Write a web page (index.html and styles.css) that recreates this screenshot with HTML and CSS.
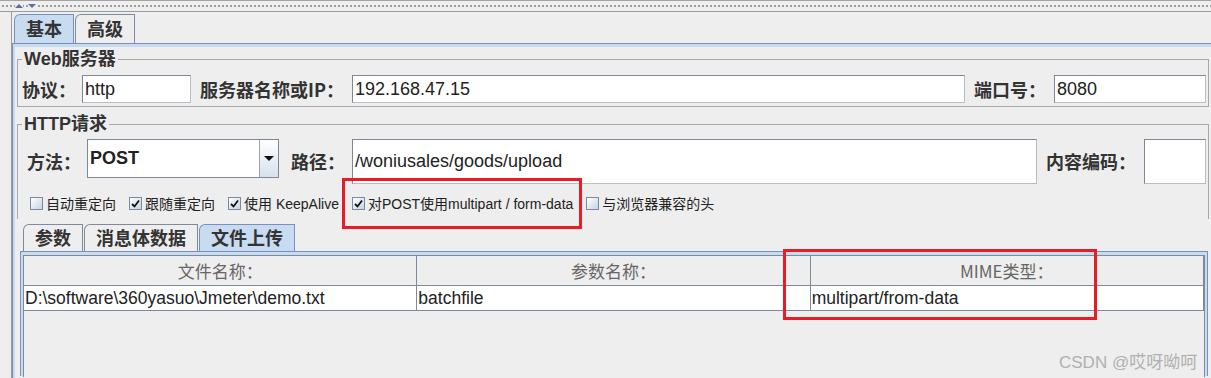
FILE: index.html
```html
<!DOCTYPE html>
<html>
<head>
    <title>HTTP请求</title>
    <link rel="stylesheet" href="styles.css">
</head>
<body>
    <div class="splitter">
        <span class="arrow-up"></span>
        <span class="arrow-down"></span>
    </div>
    <div class="main">
        <div class="tabs">
            <div class="tab selected">基本</div>
            <div class="tab">高级</div>
        </div>
        <div class="tab-panel">
            <fieldset class="group">
                <legend>Web服务器</legend>
                <div class="row web-row">
                    <label class="lbl">协议：</label>
                    <div class="field w-proto">http</div>
                    <label class="lbl gap-l">服务器名称或IP：</label>
                    <div class="field grow">192.168.47.15</div>
                    <label class="lbl gap-l">端口号：</label>
                    <div class="field w-port">8080</div>
                </div>
            </fieldset>
            <fieldset class="group http">
                <legend>HTTP请求</legend>
                <div class="row req-row">
                    <label class="lbl">方法：</label>
                    <div class="combo">
                        <span class="combo-text">POST</span>
                        <span class="combo-btn"><span class="tri"></span></span>
                    </div>
                    <label class="lbl path-lbl">路径：</label>
                    <div class="field tall grow">/woniusales/goods/upload</div>
                    <label class="lbl gap-l">内容编码：</label>
                    <div class="field tall w-enc"></div>
                </div>
                <div class="checks">
                    <span class="check"><span class="box"></span>自动重定向</span>
                    <span class="check"><span class="box on"><svg width="9" height="9" viewBox="0 0 9 9"><path d="M1 5 L3.5 7.5 L8 1.5" fill="none" stroke="#111" stroke-width="1.8"/></svg></span>跟随重定向</span>
                    <span class="check"><span class="box on"><svg width="9" height="9" viewBox="0 0 9 9"><path d="M1 5 L3.5 7.5 L8 1.5" fill="none" stroke="#111" stroke-width="1.8"/></svg></span>使用 KeepAlive</span>
                    <span class="check"><span class="box on"><svg width="9" height="9" viewBox="0 0 9 9"><path d="M1 5 L3.5 7.5 L8 1.5" fill="none" stroke="#111" stroke-width="1.8"/></svg></span>对POST使用multipart / form-data</span>
                    <span class="check"><span class="box"></span>与浏览器兼容的头</span>
                </div>
            </fieldset>
            <div class="inner">
                <div class="tabs inner-tabs">
                    <div class="tab">参数</div>
                    <div class="tab">消息体数据</div>
                    <div class="tab selected">文件上传</div>
                </div>
                <div class="tab-panel inner-panel">
                    <div class="table">
                        <div class="thead">
                            <div class="th">文件名称：</div>
                            <div class="th">参数名称：</div>
                            <div class="th">MIME类型：</div>
                        </div>
                        <div class="tr">
                            <div class="td">D:\software\360yasuo\Jmeter\demo.txt</div>
                            <div class="td">batchfile</div>
                            <div class="td">multipart/from-data</div>
                        </div>
                    </div>
                </div>
            </div>
        </div>
    </div>

    <div class="mark mark-post"></div>
    <div class="mark mark-mime"></div>
    <div class="watermark">CSDN @哎呀呦呵</div>
</body>
</html>
```

FILE: styles.css
```css
body {
    margin: 0;
    height: 378px;
    overflow: hidden;
    background-color: #eeeeee;
    font-family: "Liberation Sans", "Noto Sans CJK SC", sans-serif;
    color: #222;
    position: relative;
}
.splitter {
    box-sizing: border-box;
    height: 12px;
    border-top: 1px solid #a4a4a4;
    border-bottom: 1px solid #9a9a9a;
    background-image: radial-gradient(circle, #9c9c9c 1px, transparent 1.2px);
    background-size: 4px 4px;
    background-position: 1px 3px;
    background-repeat: repeat-x;
    display: flex;
    align-items: flex-start;
    padding-left: 15px;
    gap: 5px;
}
.arrow-up, .arrow-down {
    width: 0;
    height: 0;
    margin-top: 3px;
    border-left: 4px solid transparent;
    border-right: 4px solid transparent;
    background: #eee;
}
.arrow-up {
    border-bottom: 4px solid #5b7099;
}
.arrow-down {
    border-top: 4px solid #5b7099;
}
.main {
    box-sizing: border-box;
    margin-left: 11px;
    border-left: 1px solid #9c9c9c;
    padding-top: 2px;
    height: 366px;
}
.tabs {
    display: flex;
    margin-left: 2px;
    height: 29px;
}
.tab {
    font-family: "Noto Sans CJK SC", sans-serif;
    font-size: 18px;
    font-weight: bold;
    line-height: 27px;
    padding: 0 11px;
    border: 1px solid #7d8aa0;
    border-bottom: none;
    border-top-left-radius: 6px;
    margin-right: 1px;
    color: #333;
}
.tab.selected {
    background-color: #c8dcf1;
    border-color: #7b8fba;
}
.tab-panel {
    box-sizing: border-box;
    border: 1px solid #7b8fba;
    border-bottom: none;
    border-right: none;
    padding-top: 3px;
    padding-left: 2px;
    box-shadow: inset 2px 3px 0 #c8dcf1;
    height: 335px;
}
.group {
    margin: 2px 2px 0 2px;
    padding: 6px 2px 3px 4px;
    border: 1px solid #a8a8a8;
    min-width: 0;
}
.group legend {
    padding: 0 2px;
    font-size: 18px;
    line-height: 20px;
    font-weight: bold;
    color: #333;
}
.group.http {
    margin-top: 7px;
    padding: 4px 2px 6px 4px;
    border-bottom: none;
}
.row {
    display: flex;
    align-items: center;
}
.web-row {
    height: 28px;
}
.req-row {
    height: 46px;
    padding-left: 5px;
}
.lbl {
    font-family: "Noto Sans CJK SC", sans-serif;
    font-size: 18px;
    font-weight: bold;
    color: #333;
    margin-right: 6px;
    white-space: nowrap;
}
.gap-l {
    margin-left: 9px;
    margin-right: 8px;
}
.path-lbl {
    margin-left: 12px;
    margin-right: 7px;
}
.field {
    box-sizing: border-box;
    height: 28px;
    background: #fff;
    border: 1px solid #7d8796;
    border-right-color: #b8bec8;
    border-bottom-color: #b8bec8;
    font-size: 18px;
    line-height: 26px;
    padding-left: 2px;
    white-space: nowrap;
    overflow: hidden;
}
.field.tall {
    height: 45px;
    line-height: 43px;
}
.grow {
    flex: 1;
}
.w-proto {
    width: 109px;
}
.w-port {
    width: 152px;
}
.w-enc {
    width: 62px;
}
.combo {
    box-sizing: border-box;
    width: 192px;
    height: 39px;
    align-self: flex-start;
    margin-top: 1px;
    display: flex;
    background: #fff;
    border: 1px solid #7d8796;
}
.combo-text {
    flex: 1;
    font-size: 18px;
    font-weight: bold;
    line-height: 37px;
    padding-left: 2px;
}
.combo-btn {
    width: 18px;
    border-left: 1px solid #9aa6b8;
    background: linear-gradient(#ffffff, #d7e1ee);
    display: flex;
    align-items: center;
    justify-content: center;
}
.tri {
    width: 0;
    height: 0;
    border-left: 5px solid transparent;
    border-right: 5px solid transparent;
    border-top: 5px solid #111;
}
.checks {
    display: flex;
    align-items: center;
    gap: 13px;
    margin-top: 9px;
    padding-left: 8px;
    font-size: 14px;
    height: 20px;
}
.check {
    display: flex;
    align-items: center;
    white-space: nowrap;
}
.box {
    box-sizing: border-box;
    width: 13px;
    height: 13px;
    margin-right: 3px;
    border: 1px solid #7a8aa3;
    background: linear-gradient(135deg, #ffffff, #c6d3e4);
    display: flex;
    align-items: center;
    justify-content: center;
}
.inner {
    margin: 5px 3px 0 5px;
}
.inner-tabs {
    margin-left: 3px;
    height: 27px;
}
.inner-tabs .tab {
    line-height: 25px;
    padding: 0 11px;
}
.inner-panel {
    border-right: 1px solid #7b8fba;
    box-shadow: inset 2px 3px 0 #c8dcf1, inset -2px 0 0 #c8dcf1;
    padding-right: 2px;
    padding-top: 3px;
    height: 125px;
}
.table {
    box-sizing: border-box;
    border: 1px solid #7d8a99;
    border-bottom: none;
    height: 122px;
}
.thead, .tr {
    display: flex;
}
.thead {
    height: 29px;
    border-bottom: 1px solid #7d8a99;
}
.th {
    flex: 1;
    text-align: center;
    font-family: "Noto Sans CJK SC", sans-serif;
    font-size: 17px;
    line-height: 29px;
    color: #666;
    border-right: 1px solid #7d8a99;
}
.tr {
    height: 24px;
    background: #fff;
    border-bottom: 1px solid #7d8a99;
}
.td {
    flex: 1;
    font-size: 17.5px;
    line-height: 24px;
    padding-left: 1px;
    border-right: 1px solid #7d8a99;
    white-space: nowrap;
    overflow: hidden;
}
.mark {
    position: absolute;
    box-sizing: border-box;
    border: 3px solid #e81c24;
}
.mark-post {
    left: 342px;
    top: 178px;
    width: 240px;
    height: 51px;
}
.mark-mime {
    left: 783px;
    top: 249px;
    width: 314px;
    height: 71px;
}
.watermark {
    position: absolute;
    left: 1059px;
    top: 348px;
    font-size: 17px;
    color: #b0b0b0;
}
```
